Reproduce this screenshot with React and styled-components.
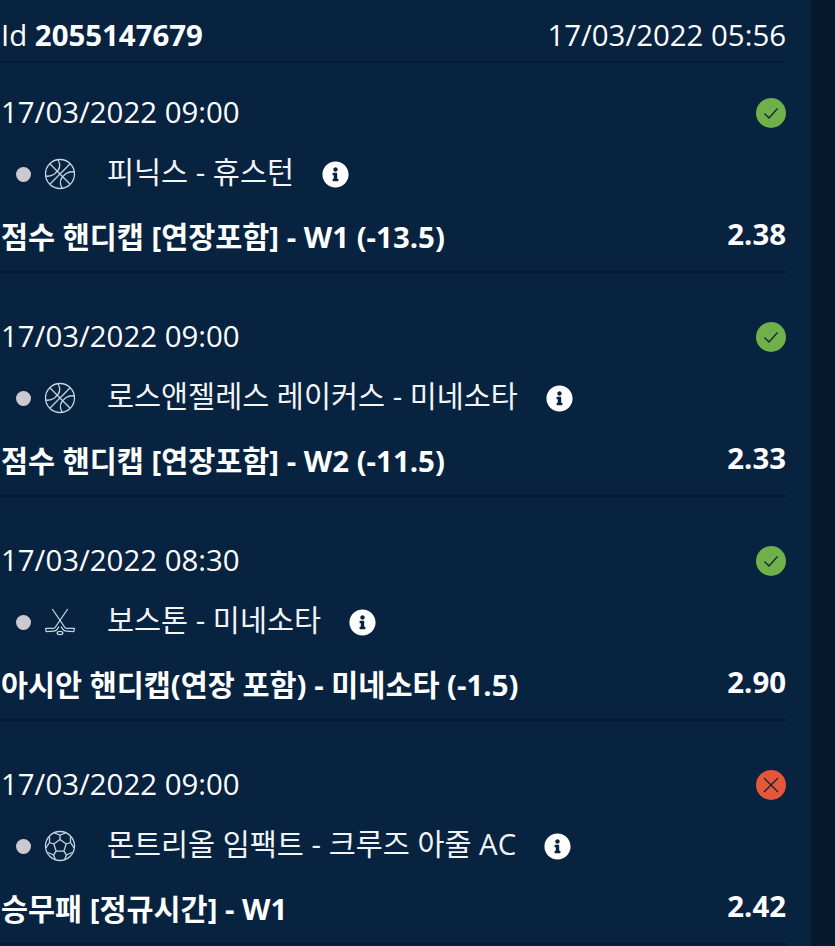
import React from 'react';
import styled, { createGlobalStyle } from 'styled-components';
import { FaInfoCircle } from 'react-icons/fa';

const GlobalStyle = createGlobalStyle`
  html, body {
    margin: 0;
    padding: 0;
    background: #05182c;
    overflow: hidden;
  }
  * {
    box-sizing: border-box;
  }
`;

const Page = styled.div`
  width: 835px;
  height: 946px;
  padding-right: 24px;
  background: #05182c;
  font-family: "Open Sans", "Noto Sans CJK KR", sans-serif;
  font-size: 29.4px;
  color: #fff;
  overflow: hidden;
`;

const Panel = styled.div`
  height: 946px;
  padding-right: 25px;
  background: #07233f;
  display: flex;
  flex-direction: column;
`;

const Header = styled.div`
  height: 63px;
  flex-shrink: 0;
  padding: 10px 0 0 1px;
  margin-bottom: 30px;
  display: flex;
  justify-content: space-between;
  align-items: flex-start;
  line-height: 50px;
  border-bottom: 2px solid #051a30;
`;

const IdLabel = styled.div`
  font-weight: 400;

  b {
    font-weight: 700;
  }
`;

const Bet = styled.div`
  height: 180px;
  margin-bottom: 44px;
  padding-left: 1px;
  flex-shrink: 0;
  border-bottom: 2px solid #051a30;
`;

const Row = styled.div`
  display: flex;
  justify-content: space-between;
  align-items: center;
  height: 40px;
`;

const TimeText = styled.span`
  position: relative;
  top: -1px;
`;

const GameRow = styled.div`
  display: flex;
  align-items: center;
  height: 40px;
  margin-top: 21px;
  padding-left: 15px;
`;

const Dot = styled.span`
  width: 15px;
  height: 15px;
  border-radius: 50%;
  background: #cbcbcf;
  flex-shrink: 0;
`;

const SportIcon = styled.svg`
  width: 32px;
  height: 32px;
  margin-left: 13px;
  flex-shrink: 0;
  fill: none;
  stroke: #c5d3df;
  stroke-width: 1.3;
`;

const GameName = styled.span`
  margin-left: 31px;
  color: #f2f5f8;
  position: relative;
  top: -4px;
`;

const InfoIcon = styled(FaInfoCircle)`
  width: 27px;
  height: 27px;
  margin-left: 28px;
  color: #fff;
  flex-shrink: 0;
`;

const MarketRow = styled(Row)`
  margin-top: 21px;
  font-weight: 700;
`;

const Odds = styled.span`
  position: relative;
  top: -1px;
`;

const StatusBadge = styled.span`
  width: 30px;
  height: 30px;
  border-radius: 50%;
  background: ${(props) => (props.$lost ? '#e5573b' : '#6fb04a')};
  display: flex;
  align-items: center;
  justify-content: center;
`;

const StatusIcon = styled.svg`
  width: 20px;
  height: 20px;
  fill: none;
  stroke: #10283a;
  stroke-width: 1.4;
`;

const Basketball = () => (
  <SportIcon viewBox="0 0 32 32">
    <circle cx="16" cy="16" r="14.5" />
    <path d="M5.8 5.8 L26.2 26.2 M26.2 5.8 L5.8 26.2" />
    <path d="M14 1.8 C17 7 16 12 10.5 16 C7.5 18 4 18.5 1.7 18" />
    <path d="M18 30.2 C15 25 16 20 21.5 16 C24.5 14 28 13.5 30.3 14" />
  </SportIcon>
);

const Hockey = () => (
  <SportIcon viewBox="0 0 32 32">
    <path d="M23.7 3 L11.5 21 Q11 22.3 9 22.3 L1.8 22.3 Q1.4 25.6 3 25.7 L9.5 25.2 Q12 25 13.5 22.8 L15 20.5" />
    <path d="M8.3 3 L20.5 21 Q21 22.3 23 22.3 L30.2 22.3 Q30.6 25.6 29 25.7 L22.5 25.2 Q20 25 18.5 22.8 L17 20.5" />
    <ellipse cx="16" cy="27" rx="2.8" ry="1.6" />
  </SportIcon>
);

const Soccer = () => (
  <SportIcon viewBox="0 0 32 32">
    <circle cx="16" cy="16" r="14.5" />
    <path d="M16 9.5 L22.2 14 L19.8 21.2 L12.2 21.2 L9.8 14 Z" />
    <path d="M16 9.5 L16 5 M22.2 14 L26.5 12.5 M19.8 21.2 L22.5 25 M12.2 21.2 L9.5 25 M9.8 14 L5.5 12.5" />
    <path d="M10.5 3 L16 5 L21.5 3 M26.5 12.5 L26.5 6.5 M26.5 12.5 L30 18 M22.5 25 L28 22.5 M22.5 25 L20.5 30 M9.5 25 L11.5 30 M9.5 25 L4 22.5 M5.5 12.5 L5.5 6.5 M5.5 12.5 L2 18" />
  </SportIcon>
);

const sportIcons = { basketball: Basketball, hockey: Hockey, soccer: Soccer };

const bets = [
  { time: '17/03/2022 09:00', sport: 'basketball', game: '피닉스 - 휴스턴', market: '점수 핸디캡 [연장포함] - W1 (-13.5)', odds: '2.38' },
  { time: '17/03/2022 09:00', sport: 'basketball', game: '로스앤젤레스 레이커스 - 미네소타', market: '점수 핸디캡 [연장포함] - W2 (-11.5)', odds: '2.33' },
  { time: '17/03/2022 08:30', sport: 'hockey', game: '보스톤 - 미네소타', market: '아시안 핸디캡(연장 포함) - 미네소타 (-1.5)', odds: '2.90' },
  { time: '17/03/2022 09:00', sport: 'soccer', game: '몬트리올 임팩트 - 크루즈 아줄 AC', market: '승무패 [정규시간] - W1', odds: '2.42', lost: true },
];

function App() {
  return (
    <Page>
      <GlobalStyle />
      <Panel>
        <Header>
          <IdLabel>Id <b>2055147679</b></IdLabel>
          <div>17/03/2022 05:56</div>
        </Header>
        {bets.map((bet, i) => {
          const Icon = sportIcons[bet.sport];
          return (
            <Bet key={i}>
              <Row>
                <TimeText>{bet.time}</TimeText>
                <StatusBadge $lost={bet.lost}>
                  <StatusIcon viewBox="0 0 20 20">
                    {bet.lost
                      ? <path d="M3 3 L17 17 M17 3 L3 17" />
                      : <path d="M3.5 10.5 L8 15 L16.5 5.5" />}
                  </StatusIcon>
                </StatusBadge>
              </Row>
              <GameRow>
                <Dot />
                <Icon />
                <GameName>{bet.game}</GameName>
                <InfoIcon />
              </GameRow>
              <MarketRow>
                <span>{bet.market}</span>
                <Odds>{bet.odds}</Odds>
              </MarketRow>
            </Bet>
          );
        })}
      </Panel>
    </Page>
  );
}

export default App;
